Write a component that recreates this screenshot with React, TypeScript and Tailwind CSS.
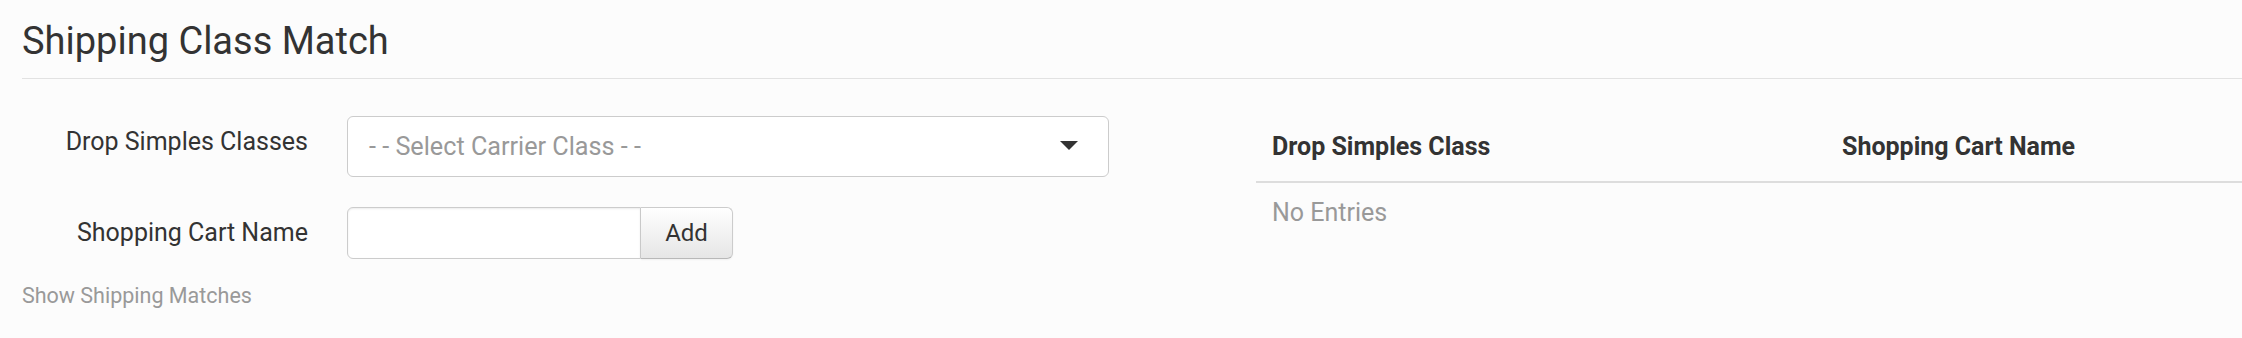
import React from "react";

export default function App() {
  return (
    <div
      className="w-full h-[338px] bg-[#fcfcfc] text-[#333333] overflow-hidden"
      style={{ fontFamily: "Roboto, 'Liberation Sans', sans-serif" }}
    >
      <div className="pl-[22px] pt-[18px]">
        <h1 className="text-[38px] leading-[46px] font-normal pb-[14px] border-b border-[#e2e2e2]">
          Shipping Class Match
        </h1>
      </div>
      <div className="flex pl-[22px] pt-[37px]">
        <div className="w-[1087px] shrink-0">
          <div className="flex items-start">
            <label className="w-[286px] text-right text-[25px] leading-[30px] pt-[11px] shrink-0">
              Drop Simples Classes
            </label>
            <div className="ml-[39px] w-[762px] h-[61px] bg-white border border-[#cccccc] rounded-[6px] flex items-center justify-between pl-[21px] pr-[30px]">
              <span className="text-[25.2px] leading-[30px] text-[#999999]">
                - - Select Carrier Class - -
              </span>
              <svg width="18" height="9" viewBox="0 0 18 9" className="mt-[-2px]">
                <path d="M0 0 L18 0 L9 9 Z" fill="#333333" />
              </svg>
            </div>
          </div>
          <div className="flex items-start mt-[30px]">
            <label className="w-[286px] text-right text-[25px] leading-[30px] pt-[11px] shrink-0">
              Shopping Cart Name
            </label>
            <div className="ml-[39px] flex h-[52px]">
              <input
                type="text"
                className="w-[294px] h-[52px] bg-white border border-[#cccccc] rounded-l-[6px] outline-none shadow-[inset_0_1px_2px_rgba(0,0,0,0.08)]"
              />
              <button className="w-[92px] h-[52px] border border-l-0 border-[#cccccc] border-b-[#b8b8b8] rounded-r-[6px] bg-gradient-to-b from-white to-[#e6e6e6] text-[24px] leading-[30px] text-[#333333] shadow-[0_1px_2px_rgba(0,0,0,0.05)]">
                Add
              </button>
            </div>
          </div>
          <div className="mt-[24px] text-[21.5px] leading-[25px] text-[#999999]">
            Show Shipping Matches
          </div>
        </div>
        <div className="ml-[147px] flex-1">
          <div className="flex pt-[16px] pb-[19px] border-b-2 border-[#dddddd] font-bold text-[25px] leading-[30px]">
            <div className="w-[586px] pl-[16px] shrink-0">Drop Simples Class</div>
            <div className="flex-1">Shopping Cart Name</div>
          </div>
          <div className="pl-[16px] pt-[15px] text-[25px] leading-[30px] text-[#999999]">
            No Entries
          </div>
        </div>
      </div>
    </div>
  );
}
